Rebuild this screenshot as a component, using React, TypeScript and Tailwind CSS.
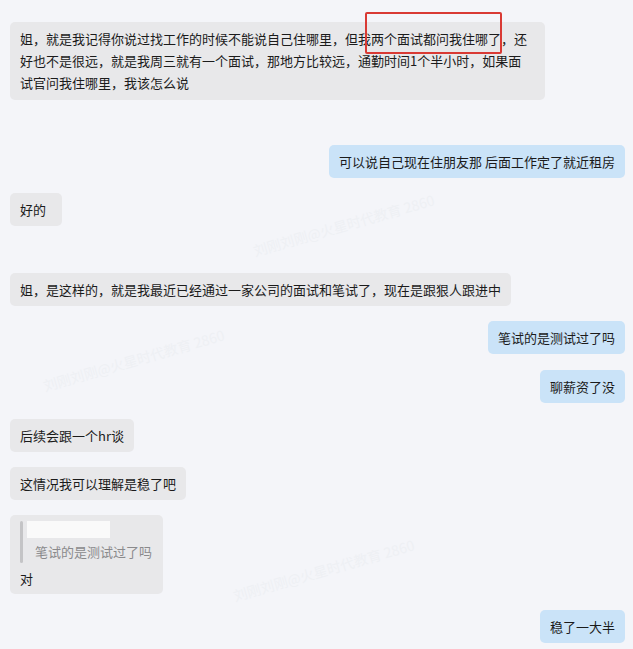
import type { ReactNode } from "react";

const FONT = '"Microsoft YaHei", "Noto Sans CJK SC", "Noto Sans", sans-serif';

type Side = "left" | "right";

// faint diagonal watermarks, kept to the empty stretches of the chat
const MARKS: { x: number; y: number }[] = [
  { x: 250, y: 215 },
  { x: 230, y: 560 },
  { x: 40, y: 350 },
];

function Bubble({
  side,
  children,
  className = "",
}: {
  side: Side;
  children: ReactNode;
  className?: string;
}) {
  return (
    <div className={side === "left" ? "flex justify-start" : "flex justify-end"}>
      <div
        className={
          "rounded-[5px] px-[10px] py-[6px] text-[13px] leading-[21px] text-[#1b1b1b] " +
          (side === "left" ? "bg-[#e8e8ea] " : "bg-[#cae3f8] ") +
          className
        }
      >
        {children}
      </div>
    </div>
  );
}

export default function App() {
  return (
    <div
      className="relative h-[649px] w-[633px] overflow-hidden bg-[#f4f5f9]"
      style={{ fontFamily: FONT }}
    >
      {MARKS.map((m, i) => (
        <div
          key={i}
          className="pointer-events-none absolute -rotate-[16deg] whitespace-nowrap text-[14px] text-[#eef0f4]"
          style={{ left: m.x, top: m.y }}
        >
          刘刚刘刚@火星时代教育 2860
        </div>
      ))}

      <div className="relative flex flex-col pl-[10px] pr-[8px] pt-[22px]">
        <Bubble side="left" className="w-[535px] leading-[22px]">
          <span className="relative block">
            姐，就是我记得你说过找工作的时候不能说自己住哪里，但我两个面试都问我住哪了，还
            <span className="absolute left-[345px] top-[-16px] h-[42px] w-[137px] rounded-[2px] border-2 border-[#d93a34]" />
          </span>
          <span className="block">
            好也不是很远，就是我周三就有一个面试，那地方比较远，通勤时间1个半小时，如果面
          </span>
          <span className="block">试官问我住哪里，我该怎么说</span>
        </Bubble>

        <div className="mt-[45px]">
          <Bubble side="right">可以说自己现在住朋友那 后面工作定了就近租房</Bubble>
        </div>

        <div className="mt-[15px]">
          <Bubble side="left" className="min-w-[52px]">
            好的
          </Bubble>
        </div>

        <div className="mt-[47px]">
          <Bubble side="left">
            姐，是这样的，就是我最近已经通过一家公司的面试和笔试了，现在是跟狠人跟进中
          </Bubble>
        </div>

        <div className="mt-[15px]">
          <Bubble side="right">笔试的是测试过了吗</Bubble>
        </div>

        <div className="mt-[16px]">
          <Bubble side="right">聊薪资了没</Bubble>
        </div>

        <div className="mt-[16px]">
          <Bubble side="left">后续会跟一个hr谈</Bubble>
        </div>

        <div className="mt-[15px]">
          <Bubble side="left">这情况我可以理解是稳了吧</Bubble>
        </div>

        <div className="mt-[15px]">
          <Bubble side="left" className="w-[153px] pt-[6px] pb-[4px]">
            <div className="flex gap-[4px]">
              <div className="w-[3px] self-stretch rounded-full bg-[#c4c4c6]" />
              <div className="flex flex-col">
                <div className="h-[17px] w-[83px] bg-[#fafafa]" />
                <div className="mt-[3px] pl-[8px] text-[13px] leading-[22px] text-[#8a8a8c]">
                  笔试的是测试过了吗
                </div>
              </div>
            </div>
            <div className="mt-[5px] leading-[22px]">对</div>
          </Bubble>
        </div>

        <div className="mt-[16px]">
          <Bubble side="right">稳了一大半</Bubble>
        </div>
      </div>
    </div>
  );
}
